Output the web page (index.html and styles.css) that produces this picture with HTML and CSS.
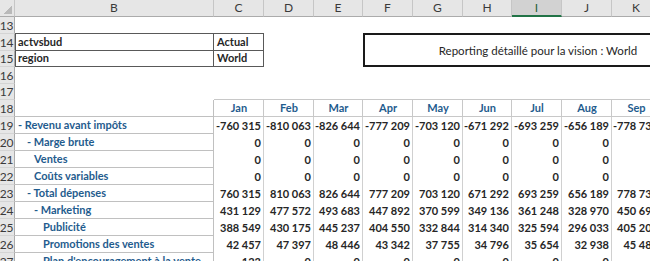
FILE: index.html
```html
<!DOCTYPE html>
<html lang="fr">
<head>
    <meta charset="UTF-8">
    <meta name="viewport" content="width=device-width, initial-scale=1.0">
    <title>Reporting détaillé</title>
    <link rel="stylesheet" href="styles.css">
</head>
<body>
    <div class="sheet">
        <!-- column letters -->
        <div class="corner"></div>
        <div class="colhead">B</div>
        <div class="colhead">C</div>
        <div class="colhead">D</div>
        <div class="colhead">E</div>
        <div class="colhead">F</div>
        <div class="colhead">G</div>
        <div class="colhead">H</div>
        <div class="colhead selected">I</div>
        <div class="colhead">J</div>
        <div class="colhead">K</div>
        <div class="colhead">L</div>

        <!-- 13 -->
        <div class="rowhead">13</div>
        <div class="cell box-top"></div>
        <div class="cell box-top"></div>

        <!-- 14 / 15 : parameters -->
        <div class="report">Reporting détaillé pour la vision : World</div>
        <div class="rowhead">14</div>
        <div class="cell param first">actvsbud</div>
        <div class="cell param">Actual</div>
        <div class="rowhead">15</div>
        <div class="cell param first">region</div>
        <div class="cell param">World</div>

        <!-- 16 / 17 -->
        <div class="rowhead">16</div>
        <div class="rowhead">17</div>
        <div class="cell"></div>
        <div class="cell month-top"></div>
        <div class="cell month-top"></div>
        <div class="cell month-top"></div>
        <div class="cell month-top"></div>
        <div class="cell month-top"></div>
        <div class="cell month-top"></div>
        <div class="cell month-top"></div>
        <div class="cell month-top"></div>
        <div class="cell month-top"></div>

        <!-- 18 : months -->
        <div class="rowhead">18</div>
        <div class="cell label"></div>
        <div class="cell month">Jan</div>
        <div class="cell month">Feb</div>
        <div class="cell month">Mar</div>
        <div class="cell month">Apr</div>
        <div class="cell month">May</div>
        <div class="cell month">Jun</div>
        <div class="cell month">Jul</div>
        <div class="cell month">Aug</div>
        <div class="cell month">Sep</div>

        <!-- 19 -->
        <div class="rowhead">19</div>
        <div class="cell label">- Revenu avant impôts</div>
        <div class="cell num">-760 315</div>
        <div class="cell num">-810 063</div>
        <div class="cell num">-826 644</div>
        <div class="cell num">-777 209</div>
        <div class="cell num">-703 120</div>
        <div class="cell num">-671 292</div>
        <div class="cell num">-693 259</div>
        <div class="cell num">-656 189</div>
        <div class="cell num">-778 735</div>

        <!-- 20 -->
        <div class="rowhead">20</div>
        <div class="cell label lvl1">- Marge brute</div>
        <div class="cell num">0</div>
        <div class="cell num">0</div>
        <div class="cell num">0</div>
        <div class="cell num">0</div>
        <div class="cell num">0</div>
        <div class="cell num">0</div>
        <div class="cell num">0</div>
        <div class="cell num">0</div>
        <div class="cell num">0</div>

        <!-- 21 -->
        <div class="rowhead">21</div>
        <div class="cell label lvl2">Ventes</div>
        <div class="cell num">0</div>
        <div class="cell num">0</div>
        <div class="cell num">0</div>
        <div class="cell num">0</div>
        <div class="cell num">0</div>
        <div class="cell num">0</div>
        <div class="cell num">0</div>
        <div class="cell num">0</div>
        <div class="cell num">0</div>

        <!-- 22 -->
        <div class="rowhead">22</div>
        <div class="cell label lvl2">Coûts variables</div>
        <div class="cell num">0</div>
        <div class="cell num">0</div>
        <div class="cell num">0</div>
        <div class="cell num">0</div>
        <div class="cell num">0</div>
        <div class="cell num">0</div>
        <div class="cell num">0</div>
        <div class="cell num">0</div>
        <div class="cell num">0</div>

        <!-- 23 -->
        <div class="rowhead">23</div>
        <div class="cell label lvl1">- Total dépenses</div>
        <div class="cell num">760 315</div>
        <div class="cell num">810 063</div>
        <div class="cell num">826 644</div>
        <div class="cell num">777 209</div>
        <div class="cell num">703 120</div>
        <div class="cell num">671 292</div>
        <div class="cell num">693 259</div>
        <div class="cell num">656 189</div>
        <div class="cell num">778 735</div>

        <!-- 24 -->
        <div class="rowhead">24</div>
        <div class="cell label lvl2">- Marketing</div>
        <div class="cell num">431 129</div>
        <div class="cell num">477 572</div>
        <div class="cell num">493 683</div>
        <div class="cell num">447 892</div>
        <div class="cell num">370 599</div>
        <div class="cell num">349 136</div>
        <div class="cell num">361 248</div>
        <div class="cell num">328 970</div>
        <div class="cell num">450 695</div>

        <!-- 25 -->
        <div class="rowhead">25</div>
        <div class="cell label lvl3">Publicité</div>
        <div class="cell num">388 549</div>
        <div class="cell num">430 175</div>
        <div class="cell num">445 237</div>
        <div class="cell num">404 550</div>
        <div class="cell num">332 844</div>
        <div class="cell num">314 340</div>
        <div class="cell num">325 594</div>
        <div class="cell num">296 033</div>
        <div class="cell num">405 207</div>

        <!-- 26 -->
        <div class="rowhead">26</div>
        <div class="cell label lvl3">Promotions des ventes</div>
        <div class="cell num">42 457</div>
        <div class="cell num">47 397</div>
        <div class="cell num">48 446</div>
        <div class="cell num">43 342</div>
        <div class="cell num">37 755</div>
        <div class="cell num">34 796</div>
        <div class="cell num">35 654</div>
        <div class="cell num">32 938</div>
        <div class="cell num">45 488</div>

        <!-- 27 -->
        <div class="rowhead">27</div>
        <div class="cell label lvl3">Plan d'encouragement à la vente</div>
        <div class="cell num">123</div>
        <div class="cell num">0</div>
        <div class="cell num">0</div>
        <div class="cell num">0</div>
        <div class="cell num">0</div>
        <div class="cell num">0</div>
        <div class="cell num">0</div>
        <div class="cell num">0</div>
        <div class="cell num">0</div>
    </div>
</body>
</html>
```

FILE: styles.css
```css
* {
    box-sizing: border-box;
}
body {
    margin: 0;
    background: #ffffff;
    overflow: hidden;
    font-family: Lato, "Liberation Sans", sans-serif;
    color: #262626;
}
.sheet {
    display: grid;
    grid-template-columns: 15px 199px 50px 50px 49px 50px 50px 49px 50px 50px 49px 50px;
    grid-template-rows: 17px 17px 17px 16px 17px 16px 17px repeat(9, 17px);
    width: max-content;
}

/* headers */
.corner {
    grid-column: 1;
    background: #e6e6e6 linear-gradient(to bottom right, transparent 50%, #b9b9b9 50%) no-repeat right 2px bottom 2px / 9px 9px;
    border-right: 1px solid #c6c6c6;
    border-bottom: 1px solid #ababab;
}
.colhead {
    background: #e6e6e6;
    border-right: 1px solid #c6c6c6;
    border-bottom: 1px solid #ababab;
    font-size: 12px;
    line-height: 16px;
    text-align: center;
    color: #3a3a3a;
}
.colhead.selected {
    background: #d2d2d2;
    border-bottom: 2px solid #217346;
    color: #1e5e3a;
}
.rowhead {
    grid-column: 1;
    background: #e6e6e6;
    border-right: 1px solid #ababab;
    border-bottom: 1px solid #d4d4d4;
    font-size: 12px;
    letter-spacing: -0.3px;
    color: #3a3a3a;
    display: flex;
    align-items: center;
    justify-content: center;
    padding-right: 1px;
}

/* cells */
.cell {
    display: flex;
    align-items: flex-end;
    padding: 0 2px 1px 3px;
    white-space: nowrap;
    overflow: hidden;
    font-size: 11px;
    font-weight: 700;
    line-height: 14px;
}
.box-top {
    border-bottom: 1px solid #595959;
}
.param {
    border-right: 1px solid #595959;
    border-bottom: 1px solid #595959;
    color: #262626;
}
.param.first {
    border-left: 1px solid #595959;
    padding-left: 2px;
}
.report {
    grid-row: 3 / span 2;
    grid-column: 6 / span 7;
    margin-top: -1px;
    border: 2px solid #1a1a1a;
    border-right: none;
    display: flex;
    align-items: center;
    justify-content: center;
    font-size: 11.5px;
    color: #262626;
}
.month-top {
    border-bottom: 1px solid #c8c8c8;
}
.month {
    border-right: 1px solid #c8c8c8;
    border-bottom: 1px solid #c8c8c8;
    justify-content: center;
    color: #1f5c8e;
}
.label {
    border-right: 1px solid #c0c0c0;
    border-bottom: 1px solid #c0c0c0;
    color: #1f5c8e;
}
.lvl1 {
    padding-left: 12px;
}
.lvl2 {
    padding-left: 19px;
}
.lvl3 {
    padding-left: 28px;
}
.num {
    border-right: 1px solid #d0d0d0;
    justify-content: flex-end;
    padding-right: 2px;
}
```
